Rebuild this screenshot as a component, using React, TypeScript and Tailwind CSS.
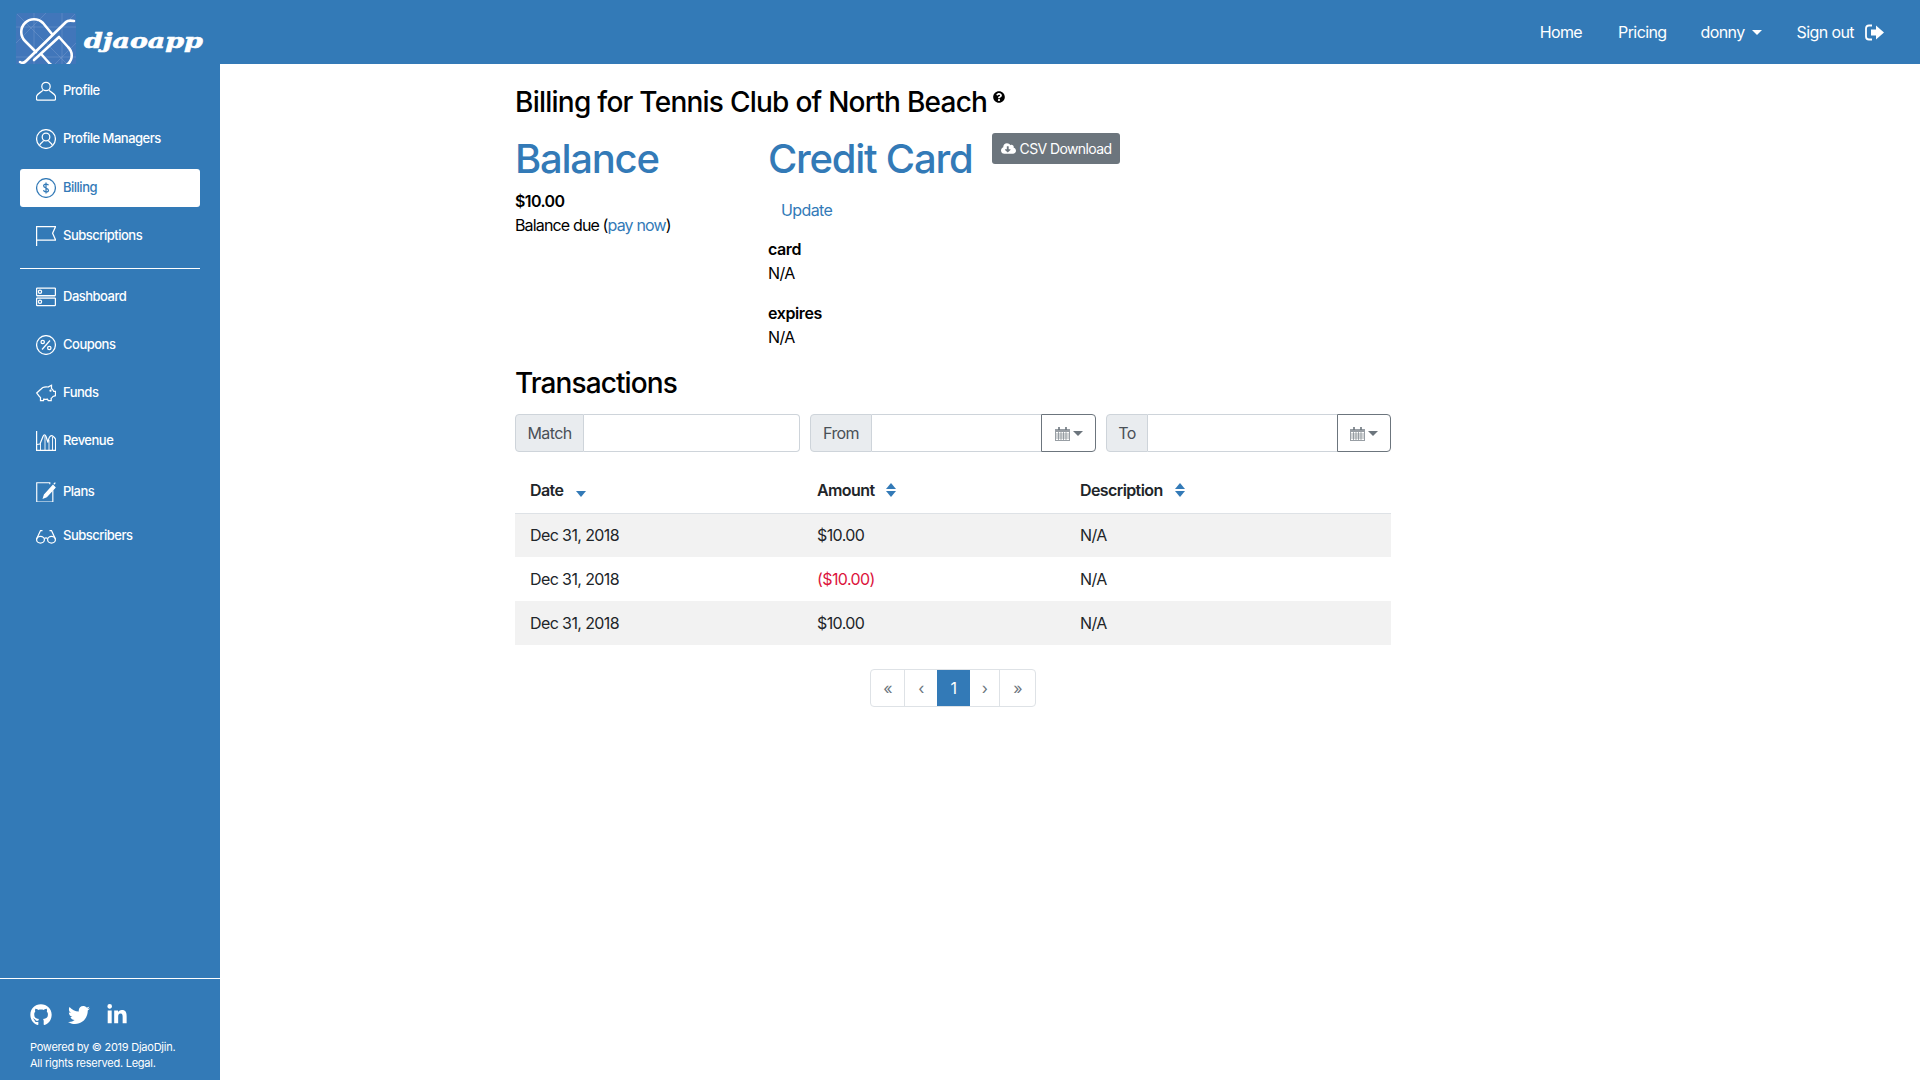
import React from "react";
import { FaGithub, FaTwitter, FaLinkedinIn, FaCloudDownloadAlt, FaQuestionCircle } from "react-icons/fa";

const S = (p: { children: React.ReactNode }) => (
  <svg width="20" height="20" viewBox="0 0 20 20" fill="none" stroke="currentColor" strokeWidth="1.25" className="shrink-0">
    {p.children}
  </svg>
);

const icons: Record<string, React.ReactNode> = {
  profile: (
    <S>
      <circle cx="10" cy="5.5" r="4.2" />
      <path d="M6.8 9.2C6 11 1 12.5.5 15.5v2.5q0 1 1 1h17q1 0 1-1v-2.5c-.5-3-5.500-4.500-6.300-6.300" />
    </S>
  ),
  managers: (
    <S>
      <circle cx="10" cy="10" r="9.400" />
      <circle cx="10" cy="8" r="3.800" />
      <path d="M3.500 16.500c1-3 4-3.500 4-5M16.500 16.500c-1-3-4-3.500-4-5" />
    </S>
  ),
  billing: (
    <S>
      <circle cx="10" cy="10" r="9.400" />
      <path d="M12.500 7.300C12 6 8 5.500 7.600 7.700c-.4 2.600 5 1.900 4.900 4.700-.1 2.300-4.500 2-5-.3M10 4.500v11" />
    </S>
  ),
  subs: (
    <S>
      <path d="M.6 20V.6h19l-3 6.700 3 6.700H.6" />
    </S>
  ),
  dash: (
    <S>
      <rect x=".6" y="1" width="18.800" height="7.500" rx=".6" />
      <rect x=".6" y="11" width="18.800" height="7.500" rx=".6" />
      <circle cx="4" cy="4.700" r="1.600" />
      <circle cx="4" cy="14.700" r="1.600" />
      <path d="M.6 9.800h18.800" strokeWidth="0.5" />
    </S>
  ),
  coupons: (
    <S>
      <circle cx="10" cy="10" r="9.400" />
      <path d="M14 5.500 6 14.500" />
      <circle cx="6.700" cy="7" r="1.700" />
      <circle cx="13.300" cy="13" r="1.700" />
    </S>
  ),
  funds: (
    <S>
      <path d="M.7 10 4.500 6.500C6 4.500 9 3.500 12 4l3.500-1.800v3.300c1 .8 1.800 1.800 2.200 2.900h1.800v4.300l-2.500.8c-.5.800-1 1.300-1.800 1.800v2.200h-3l-.7-1.300c-1 .2-2.500.2-3.800 0L7.500 17.500h-3v-3C3 13.500 1.800 11.500.7 10Z" />
      <circle cx="14.500" cy="7.700" r=".5" />
    </S>
  ),
  revenue: (
    <S>
      <path d="M.6 0v19.400h19V8" />
      <path d="M.6 13.500 4 13l3-7.500c1-2.200 2-2.200 3 0l2 6c.5-4 2-7 3.500-7 1.500 0 3 2 4 3.500" />
      <path d="M4.500 12.500v7M9 5v14.500M13 9v10.500M16.500 6v13.500" strokeWidth="0.9" />
    </S>
  ),
  plans: (
    <S>
      <path d="M15 2.500V.8H.8v21h17.500V9" transform="scale(.92)" />
      <path d="M8.500 12.800 7.500 16l3-1.200L19 5.500 17 3.500 8.500 12.800Z" fill="currentColor" />
      <path d="M17.800 2.200 19.400.6" />
    </S>
  ),
  glasses: (
    <S>
      <ellipse cx="4.500" cy="13.700" rx="3.900" ry="3.300" />
      <ellipse cx="15.500" cy="13.700" rx="3.900" ry="3.300" />
      <path d="M.6 13 4.500 4.500h2M19.400 13 15.500 4.500h-2M8.300 12.500c1-.7 2.400-.7 3.400 0" />
    </S>
  ),
};

const navTop = [
  { k: "profile", t: "Profile", h: "h-[44px]" },
  { k: "managers", t: "Profile Managers", h: "h-[51px]" },
  { k: "billing", t: "Billing", h: "h-[48px]", active: true },
  { k: "subs", t: "Subscriptions", h: "h-[48px]" },
];
const navBottom = [
  { k: "dash", t: "Dashboard", h: "h-[47px]" },
  { k: "coupons", t: "Coupons", h: "h-[50px]" },
  { k: "funds", t: "Funds", h: "h-[46px]" },
  { k: "revenue", t: "Revenue", h: "h-[50px]" },
  { k: "plans", t: "Plans", h: "h-[51px]" },
  { k: "glasses", t: "Subscribers", h: "h-[38px]" },
];

function NavItem(p: { k: string; t: string; h: string; active?: boolean }) {
  return (
    <div className={`${p.h} flex items-center`}>
      <div
        className={`flex w-full h-[38px] items-center gap-[7px] pl-4 rounded-[3px] text-[13px] font-medium tracking-[-0.5px] ${
          p.active ? "bg-white text-[#337ab7]" : "text-white"
        }`}
      >
        {icons[p.k]}
        <span>{p.t}</span>
      </div>
    </div>
  );
}

function Logo() {
  return (
    <svg width="60" height="60" viewBox="0 0 60 60" className="shrink-0 mt-[13px] rounded-[3px]">
      <rect width="60" height="60" fill="#4176ba" />
      <g stroke="#7fa3d2" strokeWidth=".5" fill="none" opacity=".8">
        <path d="M0 14h60M0 44h60M18 0v60M46 0v60M0 60 60 0M-10 40 40-10M20 70 70 20M0 0l60 60" />
      </g>
      <g stroke="#fff" strokeWidth="2.600" fill="none" strokeLinecap="round" strokeLinejoin="round">
        <path d="M4 49Q7 51 10 48L50 9Q52 7 58 8" />
        <path d="M36 21 27 10C22 5 14 5 9 10 4 15 4 23 9 28L20 39" />
        <path d="M18 47 43 24 52 34C57 39 57 46 52 51 47 56 39 56 34 51L26 42" />
      </g>
    </svg>
  );
}

function Calendar() {
  return (
    <svg width="15" height="15" viewBox="0 0 15 15" className="text-[#6c757d]">
      <path d="M0 3h15v12H0z" fill="currentColor" opacity=".7" />
      <path d="M1 6h13v8H1z" fill="#fff" />
      <path d="M1 8h13M1 10h13M1 12h13M3.500 6v8M6 6v8M8.500 6v8M11 6v8" stroke="currentColor" strokeWidth=".6" />
      <path d="M4 1v3M11 1v3" stroke="currentColor" strokeWidth="1.600" />
    </svg>
  );
}

const Caret = (p: { c: string }) => (
  <span className={`inline-block w-0 h-0 border-x-[5px] border-x-transparent border-t-[5px] ${p.c}`} />
);

function Sort(p: { both?: boolean }) {
  return (
    <svg width="10" height="14" viewBox="0 0 10 14" className="text-[#337ab7]">
      {p.both ? <path d="M5 0 10 6H0Z" fill="currentColor" /> : null}
      <path d="M0 8h10L5 14Z" fill="currentColor" />
    </svg>
  );
}

function Group(p: { label: string; w: string; addon: string; cal?: string }) {
  return (
    <div className={`flex h-[38px] ${p.w}`}>
      <div
        className={`${p.addon} flex items-center justify-center bg-[#e9ecef] border border-[#ced4da] rounded-l-[4px] text-[#495057] shrink-0`}
      >
        {p.label}
      </div>
      <div className={`flex-1 border-y border-[#ced4da] ${p.cal ? "" : "border-r rounded-r-[4px]"}`} />
      {p.cal ? (
        <div className={`${p.cal} flex items-center justify-center gap-[3px] border border-[#6c757d] rounded-r-[4px]`}>
          <Calendar />
          <Caret c="border-t-[#6c757d]" />
        </div>
      ) : null}
    </div>
  );
}

const rows = [
  { a: "$10.00", bg: "bg-[#f2f2f2]" },
  { a: "($10.00)", bg: "bg-white", red: true },
  { a: "$10.00", bg: "bg-[#f2f2f2]" },
];

const pager = [
  { t: "«", w: "w-[34px]" },
  { t: "‹", w: "w-[32px]" },
  { t: "1", w: "w-[33px]", active: true },
  { t: "›", w: "w-[30px]" },
  { t: "»", w: "w-[35px]" },
];

export default function App() {
  return (
    <div className="h-screen w-full flex flex-col overflow-hidden bg-white text-black text-[16px] tracking-[-0.6px] font-['Inter',sans-serif]">
      <header className="h-16 shrink-0 bg-[#337ab7] flex justify-between text-white">
        <div className="flex pl-4 gap-2">
          <Logo />
          <span className="mt-[25px] h-[32px] text-[21px] leading-[32px] font-bold italic font-['DejaVu_Serif',serif] tracking-[0px] scale-x-[1.28] origin-left [-webkit-text-stroke:0.6px_#fff]">
            djaoapp
          </span>
        </div>
        <nav className="flex items-center pr-[35px] text-[16px] font-normal">
          <span className="ml-9">Home</span>
          <span className="ml-9">Pricing</span>
          <span className="ml-[34px] flex items-center gap-[7px]">
            donny <Caret c="border-t-white" />
          </span>
          <span className="ml-[35px] flex items-center gap-[11px]">
            Sign out
            <svg width="20" height="17" viewBox="0 0 20 17">
              <path d="M7 1.500H4Q1 1.500 1 4.500v8Q1 15.500 4 15.500h3" stroke="#fff" strokeWidth="1.800" fill="none" />
              <path d="M6 5.500h5V1.500l8 7-8 7v-4H6Z" fill="#fff" />
            </svg>
          </span>
        </nav>
      </header>
      <div className="flex-1 flex min-h-0">
        <aside className="w-[220px] shrink-0 bg-[#337ab7] flex flex-col justify-between text-white">
          <div className="px-5 pt-[5px]">
            {navTop.map((n) => (
              <NavItem key={n.t} {...n} />
            ))}
            <div className="h-px bg-white mt-[8px] mb-[4px]" />
            {navBottom.map((n) => (
              <NavItem key={n.t} {...n} />
            ))}
          </div>
          <div className="border-t border-white h-[102px] px-[30px] pt-[24px] tracking-[-0.25px]">
            <div className="flex items-center gap-[16px] text-[22px] h-[24px]">
              <FaGithub />
              <FaTwitter />
              <FaLinkedinIn />
            </div>
            <div className="mt-[12px] text-[11px] leading-[16px]">
              Powered by © 2019 DjaoDjin.
              <br />
              All rights reserved. Legal.
            </div>
          </div>
        </aside>
        <main className="flex-1 min-w-0 pl-[295px] pt-[21px]">
          <div className="w-[876px]">
            <h2 className="text-[28px] leading-[34px] font-medium tracking-[-0.75px] flex items-start gap-[6px]">
              Billing for Tennis Club of North Beach
              <FaQuestionCircle className="text-[12px] mt-[6px]" />
            </h2>
            <div className="flex mt-[16px]">
              <div className="w-[253px]">
                <h1 className="text-[40px] leading-[48px] font-medium tracking-[-1.25px] text-[#337ab7]">Balance</h1>
                <div className="mt-[6px] font-semibold leading-6">$10.00</div>
                <div className="leading-6 tracking-[-0.85px]">
                  Balance due (<span className="text-[#337ab7]">pay now</span>)
                </div>
              </div>
              <div className="w-[224px]">
                <h1 className="text-[40px] leading-[48px] font-medium tracking-[-1.25px] text-[#337ab7]">Credit Card</h1>
                <div className="mt-[15px] ml-[13px] leading-6 text-[#337ab7]">Update</div>
                <div className="mt-[15px] font-semibold leading-6 tracking-[-0.4px]">card</div>
                <div className="leading-6">N/A</div>
                <div className="mt-[16px] font-semibold leading-6 tracking-[-0.4px]">expires</div>
                <div className="leading-6">N/A</div>
              </div>
              <div>
                <div className="h-[31px] w-[128px] -mt-[2px] flex items-center justify-center gap-[4px] bg-[#6c757d] text-white text-[14px] rounded-[3px]">
                  <FaCloudDownloadAlt className="text-[15px]" />
                  CSV Download
                </div>
              </div>
            </div>
            <h3 className="mt-[17px] text-[28px] leading-[34px] font-medium tracking-[-0.9px]">Transactions</h3>
            <div className="flex gap-[10px] mt-[14px]">
              <Group label="Match" w="w-[285px]" addon="w-[69px]" />
              <Group label="From" w="w-[286px]" addon="w-[62px]" cal="w-[55px]" />
              <Group label="To" w="w-[285px]" addon="w-[42px]" cal="w-[54px]" />
            </div>
            <table className="w-full mt-[16px] table-fixed border-collapse">
              <thead>
                <tr className="h-[45px] border-b border-[#dee2e6] text-[#212529]">
                  <th className="w-[287px] pl-[15px] text-left font-semibold">
                    <span className="flex items-center gap-[13px]">
                      Date <Sort />
                    </span>
                  </th>
                  <th className="w-[263px] pl-[15px] text-left font-semibold">
                    <span className="flex items-center gap-[12px]">
                      Amount <Sort both />
                    </span>
                  </th>
                  <th className="pl-[15px] text-left font-semibold">
                    <span className="flex items-center gap-[12px]">
                      Description <Sort both />
                    </span>
                  </th>
                </tr>
              </thead>
              <tbody className="text-[#212529]">
                {rows.map((r, i) => (
                  <tr key={i} className={`h-[44px] ${r.bg}`}>
                    <td className="pl-[15px]">Dec 31, 2018</td>
                    <td className={`pl-[15px] ${r.red ? "text-[#dc143c]" : ""}`}>{r.a}</td>
                    <td className="pl-[15px]">N/A</td>
                  </tr>
                ))}
              </tbody>
            </table>
            <div className="flex justify-center mt-[24px]">
              <div className="flex h-[38px] w-[166px] border border-[#dee2e6] rounded-[4px] text-[#6c757d]">
                {pager.map((p, i) => (
                  <div
                    key={i}
                    className={`${p.w} flex items-center justify-center ${
                      p.active ? "bg-[#337ab7] text-white" : i === 0 || i === 3 ? "border-r border-[#dee2e6]" : ""
                    }`}
                  >
                    {p.t}
                  </div>
                ))}
              </div>
            </div>
          </div>
        </main>
      </div>
    </div>
  );
}
